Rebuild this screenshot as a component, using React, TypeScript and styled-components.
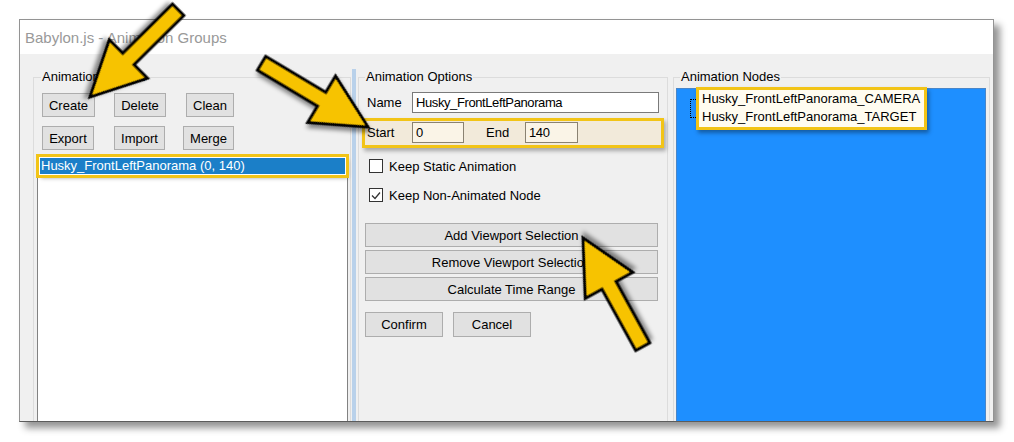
import React from "react";
import styled, { createGlobalStyle } from "styled-components";

const GlobalStyle = createGlobalStyle`
  html, body { margin: 0; padding: 0; background: #ffffff; }
  body {
    font-family: "Liberation Sans", Arial, sans-serif;
    font-size: 13px;
    color: #000;
  }
  * { box-sizing: border-box; }
`;

const Page = styled.div`
  position: relative;
  width: 1014px;
  height: 442px;
  padding: 19px 0 0 19px;
  overflow: hidden;
`;

const Window = styled.div`
  width: 975px;
  height: 403px;
  border: 1px solid #939393;
  border-bottom-color: #5c5c5c;
  background: #f0f0f0;
  box-shadow: 6px 6px 7px rgba(0, 0, 0, 0.42);
  display: flex;
  flex-direction: column;
`;

const TitleBar = styled.div`
  height: 34px;
  flex: none;
  background: #ffffff;
  display: flex;
  align-items: center;
  padding-left: 5px;
  font-size: 15px;
  color: #999999;
`;

const Client = styled.div`
  flex: 1;
  min-height: 0;
  display: flex;
  overflow: hidden;
`;

const Pane = styled.div<{ $w?: number }>`
  display: flex;
  flex-direction: column;
  ${(p) => (p.$w ? `width: ${p.$w}px; flex: none;` : "flex: 1;")}
`;

const Splitter = styled.div`
  width: 4px;
  flex: none;
  margin-top: 15px;
  background: #b9d1ea;
`;

const GroupBox = styled.div<{ $w: number; $ml: number; $pl: number; $pr: number }>`
  margin: 23px 0 0 ${(p) => p.$ml}px;
  width: ${(p) => p.$w}px;
  flex: 1;
  min-height: 0;
  border: 1px solid #dcdcdc;
  border-bottom: none;
  padding: 0 ${(p) => p.$pr}px 0 ${(p) => p.$pl}px;
  display: flex;
  flex-direction: column;
`;

const Caption = styled.div<{ $ml: number }>`
  align-self: flex-start;
  margin: -9px 0 0 ${(p) => p.$ml}px;
  padding: 0 1px;
  line-height: 16px;
  background: #f0f0f0;
`;

const ButtonRow = styled.div<{ $mt: number }>`
  display: flex;
  margin: ${(p) => p.$mt}px 0 0 5px;
`;

const Button = styled.button<{ $w?: number; $h?: number; $ml?: number }>`
  ${(p) => (p.$w ? `width: ${p.$w}px;` : "width: 100%;")}
  height: ${(p) => p.$h ?? 24}px;
  margin-left: ${(p) => p.$ml ?? 0}px;
  flex: none;
  padding: 0;
  background: #e1e1e1;
  border: 1px solid #adadad;
  border-radius: 0;
  font-family: inherit;
  font-size: 13px;
  color: #000;
  text-align: center;
`;

const ListBox = styled.div`
  margin-top: 5px;
  flex: 1;
  background: #ffffff;
  border: 1px solid #828282;
  border-bottom: none;
  padding-top: 1px;
`;

const SelectedItem = styled.div`
  margin-left: 1px;
  width: 307px;
  height: 18px;
  line-height: 16px;
  padding-left: 1px;
  background: #1b7fc8;
  border: 1px solid #ffffff;
  color: #ffffff;
  outline: 3px solid #f2c417;
  box-shadow: 2px 3px 4px rgba(0, 0, 0, 0.35);
  white-space: nowrap;
`;

const FieldRow = styled.div<{ $mt: number }>`
  display: flex;
  align-items: center;
  margin-top: ${(p) => p.$mt}px;
`;

const HighlightRow = styled.div`
  display: flex;
  align-items: center;
  margin: 5px -5px 0 -3px;
  padding: 1px 0 2px;
  border: 3px solid #f2c417;
  background: #f2eada;
  box-shadow: 2px 3px 4px rgba(0, 0, 0, 0.3);
`;

const FieldLabel = styled.span<{ $w: number; $pl: number }>`
  width: ${(p) => p.$w}px;
  flex: none;
  padding-left: ${(p) => p.$pl}px;
  white-space: nowrap;
`;

const TextBox = styled.div<{ $w?: number; $tint?: boolean }>`
  ${(p) => (p.$w ? `width: ${p.$w}px; flex: none;` : "flex: 1;")}
  height: 21px;
  line-height: 19px;
  padding-left: 3px;
  letter-spacing: -0.4px;
  border: 1px solid ${(p) => (p.$tint ? "#8a8272" : "#7a7a7a")};
  background: ${(p) => (p.$tint ? "#faf4e7" : "#ffffff")};
  white-space: nowrap;
  overflow: hidden;
`;

const CheckRow = styled.div<{ $mt: number }>`
  display: flex;
  align-items: center;
  height: 20px;
  margin-top: ${(p) => p.$mt}px;
  padding-left: 4px;
`;

const CheckBox = styled.span`
  width: 14px;
  height: 14px;
  flex: none;
  border: 1px solid #333333;
  background: #ffffff;
  margin-right: 6px;
  display: flex;
  align-items: center;
  justify-content: center;
`;

const WideButtons = styled.div`
  display: flex;
  flex-direction: column;
  gap: 3px;
  margin-top: 18px;
  width: 293px;
`;

const DialogButtons = styled.div`
  display: flex;
  margin-top: 11px;
`;

const TreeView = styled.div`
  margin-top: 3px;
  flex: 1;
  background: #1e8fff;
  border: 1px solid #4a86c8;
  border-bottom: none;
`;

const TreeBody = styled.div`
  display: flex;
  align-items: flex-start;
  margin-top: -2px;
  padding-left: 13px;
`;

const TreeLines = styled.div`
  width: 6px;
  height: 19px;
  margin-top: 12px;
  border-left: 1px dotted #000;
  border-top: 1px dotted #000;
  border-bottom: 1px dotted #000;
`;

const NodeList = styled.div`
  border: 3px solid #f2c417;
  background: #fffcf0;
  padding: 0 4px 1px 3px;
  box-shadow: 2px 3px 4px rgba(0, 0, 0, 0.35);
`;

const NodeItem = styled.div`
  height: 18px;
  line-height: 18px;
  white-space: nowrap;
`;

const Overlay = styled.svg`
  position: absolute;
  left: 0;
  top: 0;
  pointer-events: none;
`;

type ArrowProps = { x: number; y: number; angle: number };

// Callout arrow, drawn pointing along +x with its tip at the origin
const Arrow = ({ x, y, angle }: ArrowProps) => (
  <g transform={`translate(${x} ${y}) rotate(${angle})`} filter="url(#arrowShadow)">
    <polygon
      points="0,0 -54,-27 -54,-8 -124,-8 -124,8 -54,8 -54,27"
      fill="#f7c300"
      stroke="#000"
      strokeWidth={3}
      strokeLinejoin="miter"
    />
  </g>
);

export default function App() {
  return (
    <>
      <GlobalStyle />
      <Page>
        <Window>
          <TitleBar>Babylon.js - Animation Groups</TitleBar>
          <Client>
            <Pane $w={332}>
              <GroupBox $w={318} $ml={13} $pl={3} $pr={2}>
                <Caption $ml={4}>Animation Groups</Caption>
                <ButtonRow $mt={8}>
                  <Button $w={53}>Create</Button>
                  <Button $w={52} $ml={19}>Delete</Button>
                  <Button $w={48} $ml={20}>Clean</Button>
                </ButtonRow>
                <ButtonRow $mt={9}>
                  <Button $w={52}>Export</Button>
                  <Button $w={51} $ml={20}>Import</Button>
                  <Button $w={51} $ml={18}>Merge</Button>
                </ButtonRow>
                <ListBox>
                  <SelectedItem>Husky_FrontLeftPanorama (0, 140)</SelectedItem>
                </ListBox>
              </GroupBox>
            </Pane>
            <Splitter />
            <Pane $w={312}>
              <GroupBox $w={310} $ml={2} $pl={6} $pr={8}>
                <Caption $ml={0}>Animation Options</Caption>
                <FieldRow $mt={7}>
                  <FieldLabel $w={47} $pl={2}>Name</FieldLabel>
                  <TextBox>Husky_FrontLeftPanorama</TextBox>
                </FieldRow>
                <HighlightRow>
                  <FieldLabel $w={47} $pl={2}>Start</FieldLabel>
                  <TextBox $w={52} $tint>0</TextBox>
                  <FieldLabel $w={61} $pl={22}>End</FieldLabel>
                  <TextBox $w={53} $tint>140</TextBox>
                </HighlightRow>
                <CheckRow $mt={8}>
                  <CheckBox />
                  Keep Static Animation
                </CheckRow>
                <CheckRow $mt={9}>
                  <CheckBox>
                    <svg width="10" height="9" viewBox="0 0 10 9">
                      <polyline points="1,4.5 4,7.5 9,1.5" fill="none" stroke="#333" strokeWidth="1.3" />
                    </svg>
                  </CheckBox>
                  Keep Non-Animated Node
                </CheckRow>
                <WideButtons>
                  <Button>Add Viewport Selection</Button>
                  <Button>Remove Viewport Selection</Button>
                  <Button>Calculate Time Range</Button>
                </WideButtons>
                <DialogButtons>
                  <Button $w={78} $h={25}>Confirm</Button>
                  <Button $w={78} $h={25} $ml={10}>Cancel</Button>
                </DialogButtons>
              </GroupBox>
            </Pane>
            <Pane>
              <GroupBox $w={317} $ml={5} $pl={2} $pr={3}>
                <Caption $ml={4}>Animation Nodes</Caption>
                <TreeView>
                  <TreeBody>
                    <TreeLines />
                    <NodeList>
                      <NodeItem>Husky_FrontLeftPanorama_CAMERA</NodeItem>
                      <NodeItem>Husky_FrontLeftPanorama_TARGET</NodeItem>
                    </NodeList>
                  </TreeBody>
                </TreeView>
              </GroupBox>
            </Pane>
          </Client>
        </Window>
        <Overlay width={1014} height={442} viewBox="0 0 1014 442">
          <defs>
            <filter id="arrowShadow" x="-30%" y="-30%" width="160%" height="160%">
              <feDropShadow dx="3" dy="3" stdDeviation="2" floodColor="#000" floodOpacity="0.45" />
            </filter>
          </defs>
          <Arrow x={90} y={97} angle={135.3} />
          <Arrow x={368} y={127} angle={30.9} />
          <Arrow x={583} y={238} angle={-118.8} />
        </Overlay>
      </Page>
    </>
  );
}
